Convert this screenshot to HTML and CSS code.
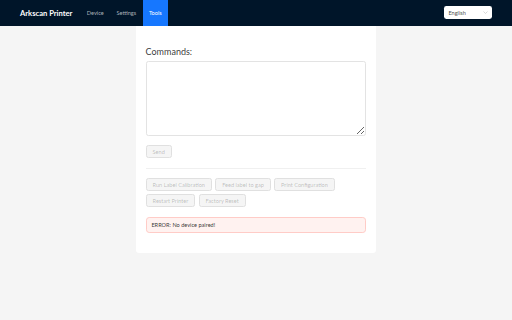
FILE: index.html
```html
<!DOCTYPE html>
<html lang="en">
<head>
<meta charset="utf-8">
<title>Arkscan Printer</title>
<link rel="stylesheet" href="styles.css">
</head>
<body>
<header class="header">
  <div class="brand">Arkscan Printer</div>
  <nav class="menu">
    <a class="menu-item">Device</a>
    <a class="menu-item">Settings</a>
    <a class="menu-item active">Tools</a>
  </nav>
  <div class="lang-select">
    <span>English</span>
    <svg class="chev" viewBox="0 0 10 6" width="5" height="3"><path d="M1 1l4 4 4-4" fill="none" stroke="#bfbfbf" stroke-width="1.2"/></svg>
  </div>
</header>
<main class="main">
  <section class="card">
    <label class="label">Commands:</label>
    <textarea class="textarea"></textarea>
    <div class="send-row"><button class="btn" disabled>Send</button></div>
    <div class="divider"></div>
    <div class="btn-group">
      <button class="btn" disabled>Run Label Calibration</button>
      <button class="btn" disabled>Feed label to gap</button>
      <button class="btn" disabled>Print Configuration</button>
      <button class="btn" disabled>Restart Printer</button>
      <button class="btn" disabled>Factory Reset</button>
    </div>
    <div class="alert">ERROR: No device paired!</div>
  </section>
</main>
</body>
</html>
```
FILE: styles.css
```css
* { box-sizing: border-box; }
html, body { margin: 0; padding: 0; }
body {
  background: #f5f5f5;
  font-family: Lato, "Open Sans", "Liberation Sans", sans-serif;
  color: rgba(0,0,0,0.88);
  width: 512px;
  height: 320px;
  overflow: hidden;
}
.header {
  height: 25.6px;
  background: #001529;
  display: flex;
  align-items: center;
  padding: 0 20px;
}
.brand {
  color: #fff;
  font-size: 7.6px;
  font-weight: 700;
  margin-right: 8px;
}
.menu { display: flex; height: 100%; }
.menu-item {
  display: flex;
  align-items: center;
  padding: 0 6.4px;
  font-size: 5.6px;
  color: rgba(255,255,255,0.65);
  height: 100%;
}
.menu-item.active {
  background: #1677ff;
  color: #fff;
}
.lang-select {
  margin-left: auto;
  width: 48px;
  height: 12.8px;
  background: #fff;
  border-radius: 2.4px;
  display: flex;
  align-items: center;
  justify-content: space-between;
  padding: 0 4.4px;
  font-size: 5.6px;
  color: rgba(0,0,0,0.75);
}
.chev { display: block; }
.main { display: flex; justify-content: center; }
.card {
  width: 240px;
  background: #fff;
  border-radius: 0 0 3.2px 3.2px;
  padding: 20.6px 9.6px 20px;
  display: flex;
  flex-direction: column;
}
.label {
  font-size: 9px;
  line-height: 12px;
  color: rgba(0,0,0,0.8);
  margin-bottom: 3px;
}
.textarea {
  width: 100%;
  height: 75px;
  border: 1px solid #e3e3e3;
  border-radius: 2.4px;
  resize: vertical;
  margin: 0;
  display: block;
}
.send-row { margin-top: 9px; display: flex; }
.btn {
  height: 12.8px;
  padding: 0 6px;
  font-family: inherit;
  font-size: 5.6px;
  color: rgba(0,0,0,0.25);
  background: #f5f5f5;
  border: 1px solid #e0e0e0;
  border-radius: 2.4px;
  margin: 0;
  line-height: 1;
}
.divider {
  height: 1px;
  background: #f0f0f0;
  margin: 9.6px 0;
}
.btn-group {
  display: flex;
  flex-wrap: wrap;
  gap: 3.2px;
}
.alert {
  margin-top: 9.6px;
  height: 16px;
  display: flex;
  align-items: center;
  padding: 0 4.8px;
  background: #fff2f0;
  border: 1px solid #ffccc7;
  border-radius: 3.2px;
  font-size: 5.6px;
  color: rgba(0,0,0,0.8);
}
```
